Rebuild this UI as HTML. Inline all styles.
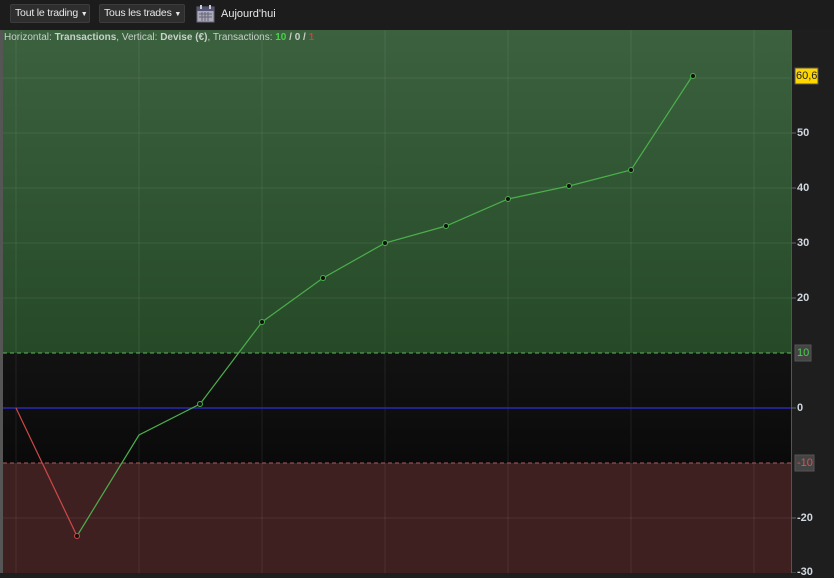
<!DOCTYPE html>
<html><head><meta charset="utf-8"><style>
body{margin:0;width:834px;height:573px;background:#1e1e1e;overflow:hidden;font-family:"Liberation Sans",sans-serif;position:relative}
.btn{position:absolute;top:4px;height:19px;box-sizing:border-box;background:#2e2e2e;border:1px solid #3c3c3c;border-radius:2px;color:#e8e8e8;font-size:10.5px;letter-spacing:-0.2px;line-height:17px;padding:0 4px;white-space:nowrap;overflow:hidden}
.lbl{position:absolute;font-size:11px;font-weight:bold;color:#d0d8e0}
</style></head><body>
<div style="position:absolute;left:0;top:0;width:834px;height:30px;background:#1c1c1c"></div>
<div class="btn" style="left:10px;width:80px">Tout le trading <span style="font-size:7px">▼</span></div>
<div class="btn" style="left:99px;width:86px">Tous les trades <span style="font-size:7px">▼</span></div>
<svg style="position:absolute;left:196px;top:4px" width="20" height="20"><rect x="1" y="3" width="17" height="15" fill="#aab" stroke="#667"/><rect x="1" y="3" width="17" height="4" fill="#557"/><rect x="4" y="1" width="2" height="4" fill="#ccd"/><rect x="13" y="1" width="2" height="4" fill="#ccd"/><path d="M3 10h13M3 13h13M6 8v9M9 8v9M12 8v9" stroke="#667" stroke-width="1"/></svg>
<div style="position:absolute;left:221px;top:8px;color:#e8e8e8;font-size:11px">Aujourd'hui</div>
<svg style="position:absolute;left:0;top:0" width="834" height="573">
<defs><linearGradient id="g" x1="0" y1="0" x2="0" y2="1"><stop offset="0" stop-color="#3b613f"/><stop offset="1" stop-color="#264a27"/></linearGradient>
<linearGradient id="b" x1="0" y1="0" x2="0" y2="1"><stop offset="0" stop-color="#121212"/><stop offset="1" stop-color="#0a0a0a"/></linearGradient></defs>
<rect x="0" y="30" width="3" height="543" fill="#555"/>
<rect x="3" y="30" width="788" height="323" fill="url(#g)"/>
<rect x="3" y="353" width="788" height="110" fill="url(#b)"/>
<rect x="3" y="463" width="788" height="110" fill="#3f2020"/>
<rect x="791" y="30" width="1" height="543" fill="#555"/>
<g stroke="#fff" stroke-opacity="0.08">
<path d="M16 30V573M139 30V573M262 30V573M385 30V573M508 30V573M631 30V573M754 30V573"/>
<path d="M3 78H791M3 133H791M3 188H791M3 243H791M3 298H791M3 518H791"/>
</g>
<path d="M3 353H791" stroke="#5ab85a" stroke-dasharray="4,3"/>
<path d="M3 463H791" stroke="#b05a5a" stroke-dasharray="4,3"/>
<path d="M3 408H791" stroke="#2828b0" stroke-width="1.5"/>
<path d="M16 408L77 536" stroke="#d04848" stroke-width="1.2" fill="none"/>
<path d="M77 536L139 435L200 404L262 322L323 278L385 243L446 226L508 199L569 186L631 170L693 75" stroke="#4caf4c" stroke-width="1.2" fill="none"/>
<g fill="#111" stroke="#4caf4c"><circle cx="200" cy="404" r="2.5"/><circle cx="262" cy="322" r="2.5"/><circle cx="323" cy="278" r="2.5"/><circle cx="385" cy="243" r="2.5"/><circle cx="446" cy="226" r="2.5"/><circle cx="508" cy="199" r="2.5"/><circle cx="569" cy="186" r="2.5"/><circle cx="631" cy="170" r="2.5"/><circle cx="693" cy="76" r="2.5"/></g>
<circle cx="77" cy="536" r="2.5" fill="#111" stroke="#d04848"/>
<g stroke="#666"><path d="M791 133h5M791 188h5M791 243h5M791 298h5M791 408h5M791 518h5M791 573h5"/></g>
<rect x="795" y="68" width="23" height="16" fill="#ffd700" stroke="#555"/>
<rect x="795" y="345" width="16" height="16" fill="#444" stroke="#555"/>
<rect x="795" y="455" width="19" height="16" fill="#444" stroke="#555"/>
</svg>
<div style="position:absolute;left:4px;top:32px;font-size:10px;color:#c8d0c8">Horizontal: <b>Transactions</b>, Vertical: <b>Devise (€)</b>, Transactions: <b style="color:#4cd04c">10</b> <b>/ 0 /</b> <b style="color:#e03838">1</b></div>
<div class="lbl" style="left:796px;top:70px;color:#222;font-weight:normal">60,6</div>
<div class="lbl" style="left:797px;top:127px">50</div>
<div class="lbl" style="left:797px;top:182px">40</div>
<div class="lbl" style="left:797px;top:237px">30</div>
<div class="lbl" style="left:797px;top:292px">20</div>
<div class="lbl" style="left:797px;top:347px;color:#4cd04c;font-weight:normal">10</div>
<div class="lbl" style="left:797px;top:402px">0</div>
<div class="lbl" style="left:797px;top:457px;color:#e05050;font-weight:normal">-10</div>
<div class="lbl" style="left:797px;top:512px">-20</div>
<div class="lbl" style="left:797px;top:566px">-30</div>
</body></html>
